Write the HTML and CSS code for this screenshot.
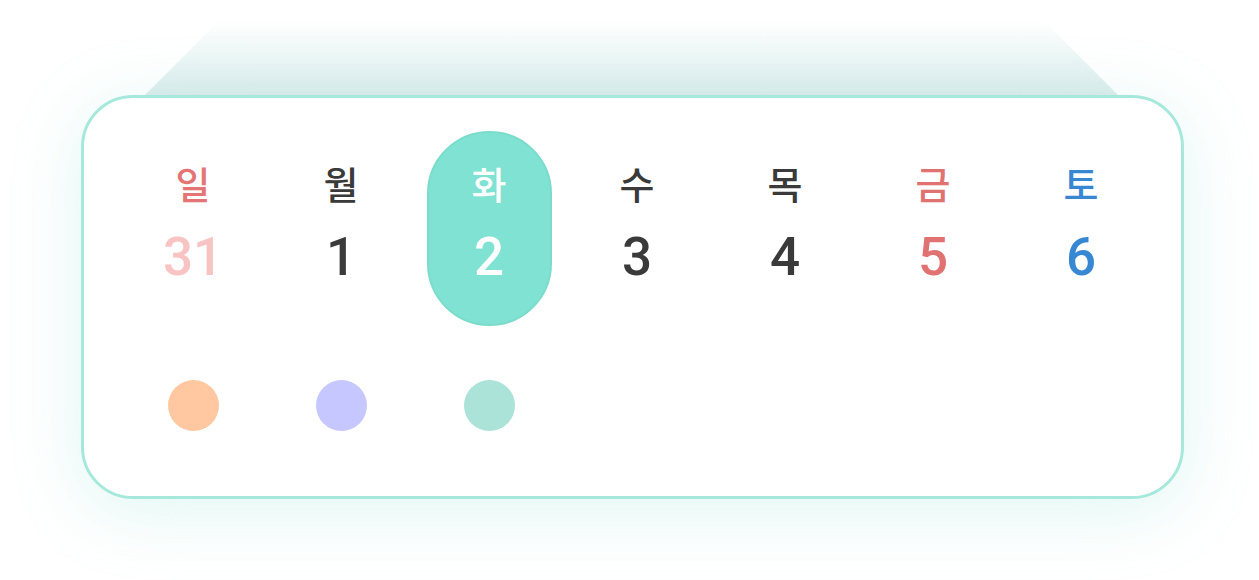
FILE: index.html
```html
<!DOCTYPE html>
<html lang="ko">
<head>
<meta charset="UTF-8">
<meta name="viewport" content="width=device-width, initial-scale=1.0">
<title>주간 캘린더</title>
<link rel="stylesheet" href="styles.css">
</head>
<body>

<div class="stage">
    <div class="week-card">
        <div class="card-back"></div>
        <div class="week-row">
            <div class="day sun"><span class="day-name">일</span><span class="day-num">31</span></div>
            <div class="day"><span class="day-name">월</span><span class="day-num">1</span></div>
            <div class="day selected"><span class="day-name">화</span><span class="day-num">2</span></div>
            <div class="day"><span class="day-name">수</span><span class="day-num">3</span></div>
            <div class="day"><span class="day-name">목</span><span class="day-num">4</span></div>
            <div class="day fri"><span class="day-name">금</span><span class="day-num">5</span></div>
            <div class="day sat"><span class="day-name">토</span><span class="day-num">6</span></div>
        </div>
        <div class="dot-row">
            <span class="dot orange"></span>
            <span class="dot violet"></span>
            <span class="dot mint"></span>
        </div>
    </div>
</div>

</body>
</html>
```

FILE: styles.css
```css
body {
    margin: 0;
    padding: 0;
    background-color: #ffffff;
    font-family: Roboto, "Noto Sans CJK KR", sans-serif;
}
.stage {
    padding: 95px 0 81px 81px;
}
.week-card {
    position: relative;
    width: 1103px;
    box-sizing: border-box;
    background-color: #ffffff;
    border: 3px solid #a6e9dc;
    border-radius: 52px;
    padding: 33px 26px 65px 35px;
    box-shadow: 0 12px 70px rgba(110, 220, 200, 0.22);
}
.card-back {
    position: absolute;
    top: -78px;
    left: 61px;
    right: 63px;
    height: 75px;
    background: linear-gradient(to bottom, rgba(220, 236, 236, 0) 0%, #dbecec 100%);
    clip-path: polygon(75px 0, calc(100% - 75px) 0, 100% 100%, 0 100%);
    z-index: -1;
}
.week-row, .dot-row {
    display: grid;
    grid-template-columns: repeat(7, 148px);
}
.day {
    justify-self: center;
    width: 125px;
    height: 195px;
    box-sizing: border-box;
    border-radius: 63px;
    padding-top: 33px;
    display: flex;
    flex-direction: column;
    align-items: center;
    color: #3a3a3a;
}
.day-name {
    font-size: 38px;
    line-height: 44px;
    font-weight: 500;
}
.day-num {
    margin-top: 21px;
    font-size: 53px;
    line-height: 56px;
    font-weight: 500;
}
.day.selected {
    background-color: #80e2d2;
    border: 2px solid #7bdccb;
    padding-top: 31px;
    color: #ffffff;
}
.day.sun .day-name { color: #e57575; }
.day.sun .day-num { color: #f8c3c3; }
.day.fri { color: #e07272; }
.day.sat { color: #3787d2; }

.dot-row {
    margin-top: 54px;
}
.dot {
    justify-self: center;
    width: 51px;
    height: 51px;
    border-radius: 50%;
}
.dot.orange { background-color: #ffc8a0; }
.dot.violet { background-color: #c7c7ff; }
.dot.mint { background-color: #abe3d8; }
```
